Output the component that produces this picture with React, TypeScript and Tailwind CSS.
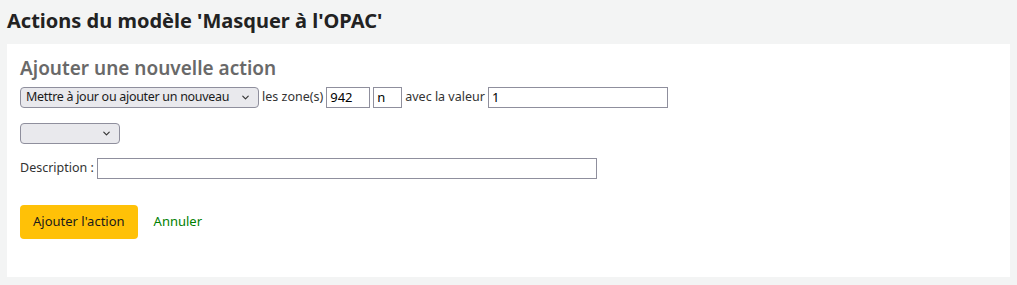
import { ChevronDown } from "lucide-react";

const font = { fontFamily: '"Noto Sans", "Open Sans", sans-serif' };

function Select({ label, width }: { label: string; width: string }) {
  return (
    <div
      className={`flex h-[21px] items-center justify-between gap-[4px] rounded-[4px] border border-[#8f8f9d] bg-[#e9e9ed] pl-[5px] pr-[7px] text-[12.5px] tracking-[-0.3px] text-[#1b1b1b] ${width}`}
    >
      <span className="whitespace-nowrap leading-none">{label}</span>
      <ChevronDown size={11} strokeWidth={2.5} className="shrink-0 text-[#333]" />
    </div>
  );
}

function Field({ value, width }: { value?: string; width: string }) {
  return (
    <div
      className={`flex h-[21px] items-center border border-[#8f8f9d] bg-white px-[3px] text-[13px] text-black ${width}`}
    >
      {value}
    </div>
  );
}

export default function App() {
  return (
    <div className="h-[285px] w-[1017px] bg-[#f3f4f4] text-[#333]" style={font}>
      <h1 className="px-[7px] pt-[9px] pb-[12px] text-[20px] font-bold leading-[23px] text-[#222]">
        Actions du modèle 'Masquer à l'OPAC'
      </h1>
      <div className="mx-[7px] h-[233px] bg-white px-[13px] pt-[12px]">
        <h2 className="text-[19px] font-semibold leading-[24px] text-[#696969]">
          Ajouter une nouvelle action
        </h2>
        <div className="mt-[7px] flex items-center gap-[3px] text-[12.5px]">
          <Select label="Mettre à jour ou ajouter un nouveau" width="w-[239px]" />
          <span>les zone(s)</span>
          <Field value="942" width="w-[44px]" />
          <Field value="n" width="w-[29px]" />
          <span>avec la valeur</span>
          <Field value="1" width="w-[180px]" />
        </div>
        <div className="mt-[15px]">
          <Select label="" width="w-[100px]" />
        </div>
        <div className="mt-[14px] flex items-center gap-[3px] text-[12.5px]">
          <span>Description :</span>
          <Field width="w-[500px]" />
        </div>
        <div className="mt-[26px] flex items-center gap-[16px]">
          <button className="h-[34px] rounded-[4px] bg-[#ffc107] px-[13px] text-[13px] text-[#1b1b1b]">
            Ajouter l'action
          </button>
          <a className="text-[13px] text-[#008000]">Annuler</a>
        </div>
      </div>
    </div>
  );
}
